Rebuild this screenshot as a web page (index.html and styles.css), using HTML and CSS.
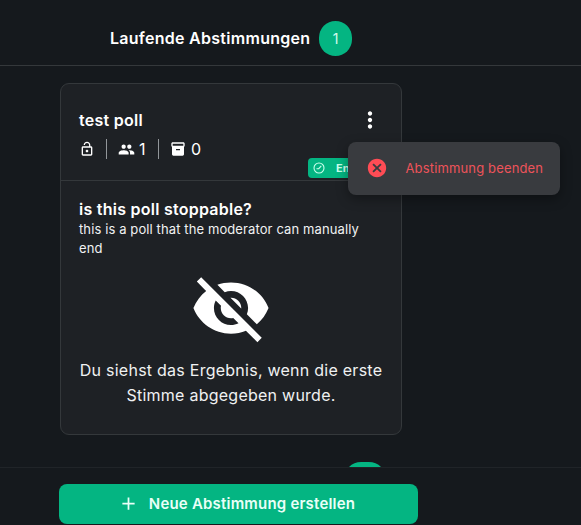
FILE: index.html
```html
<!DOCTYPE html>
<html lang="de">
<head>
<meta charset="utf-8">
<title>Abstimmungen</title>
<link rel="stylesheet" href="styles.css">
</head>
<body>
<div class="app">
  <header class="header">
    <h1 class="header-title">Laufende Abstimmungen</h1>
    <span class="count">1</span>
  </header>
  <main class="content">
    <article class="card">
      <div class="card-head">
        <div class="title-row">
          <h2 class="poll-name">test poll</h2>
          <svg class="more" viewBox="0 0 24 24"><path d="M12 8c1.100 0 2-.9 2-2s-.9-2-2-2-2 .9-2 2 .9 2 2 2zm0 2c-1.100 0-2 .9-2 2s.9 2 2 2 2-.9 2-2-.9-2-2-2zm0 6c-1.100 0-2 .9-2 2s.9 2 2 2 2-.9 2-2-.9-2-2-2z"/></svg>
        </div>
        <div class="meta">
          <svg class="meta-icon" viewBox="0 0 24 24"><path d="M12 17c1.100 0 2-.9 2-2s-.9-2-2-2-2 .9-2 2 .9 2 2 2zm6-9h-1V6c0-2.760-2.240-5-5-5S7 3.240 7 6h1.900c0-1.710 1.390-3.100 3.100-3.100 1.710 0 3.100 1.390 3.100 3.100v2H6c-1.100 0-2 .9-2 2v10c0 1.100.9 2 2 2h12c1.100 0 2-.9 2-2V10c0-1.100-.9-2-2-2zm0 12H6V10h12v10z"/></svg>
          <span class="divider"></span>
          <svg class="meta-icon people" viewBox="0 0 24 24"><path d="M16 11c1.660 0 2.990-1.340 2.990-3S17.660 5 16 5s-3 1.340-3 3 1.340 3 3 3zm-8 0c1.660 0 2.990-1.340 2.990-3S9.660 5 8 5 5 6.340 5 8s1.340 3 3 3zm0 2c-2.330 0-7 1.170-7 3.500V19h14v-2.500C15 14.170 10.330 13 8 13zm8 0c-.29 0-.62.020-.97.050 1.160.84 1.970 1.970 1.970 3.450V19h6v-2.500c0-2.330-4.670-3.500-7-3.500z"/></svg>
          <span class="meta-num">1</span>
          <span class="divider"></span>
          <svg class="meta-icon archive" viewBox="0 0 24 24"><path d="M20 2H4c-1 0-2 .9-2 2v3.010c0 .72.430 1.340 1 1.690V20c0 1.100 1.100 2 2 2h14c.9 0 2-.9 2-2V8.700c.57-.35 1-.97 1-1.690V4c0-1.100-1-2-2-2zm-5 12H9v-2h6v2zm5-7H4V4h16v3z"/></svg>
          <span class="meta-num">0</span>
        </div>
        <div class="chip">
          <svg class="chip-icon" viewBox="0 0 14 14"><circle cx="7" cy="7" r="5"/><path d="M4.500 7.800l2.200-.2 2.600-2.800"/></svg>
          <span>Endlos</span>
        </div>
        <div class="menu">
          <svg class="menu-icon" viewBox="0 0 24 24"><path d="M12 2C6.470 2 2 6.470 2 12s4.470 10 10 10 10-4.470 10-10S17.530 2 12 2zm5 13.590L15.590 17 12 13.410 8.410 17 7 15.590 10.590 12 7 8.410 8.410 7 12 10.590 15.590 7 17 8.410 13.410 12 17 15.590z"/></svg>
          <span class="menu-label">Abstimmung beenden</span>
        </div>
      </div>
      <div class="card-body">
        <h3 class="question">is this poll stoppable?</h3>
        <p class="hint">this is a poll that the moderator can manually end</p>
        <svg class="eye" viewBox="0 0 24 24"><path d="M12 7c2.760 0 5 2.240 5 5 0 .65-.13 1.260-.36 1.830l2.920 2.920c1.510-1.260 2.700-2.890 3.430-4.750-1.730-4.390-6-7.500-11-7.500-1.400 0-2.740.25-3.980.7l2.160 2.160C10.740 7.130 11.350 7 12 7zM2 4.270l2.280 2.280.46.46C3.080 8.300 1.780 10.020 1 12c1.730 4.390 6 7.500 11 7.500 1.550 0 3.030-.3 4.380-.84l.42.42L19.730 22 21 20.730 3.270 3 2 4.270zM7.530 9.800l1.550 1.550c-.05.21-.08.43-.08.65 0 1.660 1.340 3 3 3 .22 0 .44-.03.65-.08l1.550 1.550c-.67.33-1.410.53-2.200.53-2.760 0-5-2.240-5-5 0-.79.2-1.530.53-2.200zm4.310-.78l3.150 3.150.02-.16c0-1.660-1.340-3-3-3l-.17.010z"/></svg>
        <p class="result">Du siehst das Ergebnis, wenn die erste Stimme abgegeben wurde.</p>
      </div>
    </article>
    <div class="next"></div>
  </main>
  <footer class="footer">
    <button class="create"><svg class="plus" viewBox="0 0 24 24"><path d="M19 13h-6v6h-2v-6H5v-2h6V5h2v6h6v2z"/></svg><span>Neue Abstimmung erstellen</span></button>
  </footer>
</div>
</body>
</html>
```
FILE: styles.css
```css
* { box-sizing: border-box; }
body { margin: 0; background: #15191d; color: #fff; font-family: Inter, "Liberation Sans", sans-serif; }
h1, h2, h3, p { margin: 0; }
svg { display: block; fill: currentColor; flex: none; }

.app { height: 525px; display: flex; flex-direction: column; overflow: hidden; }
.header { height: 66px; flex: none; display: flex; align-items: flex-start; padding: 21px 0 0 110px; gap: 9px; border-bottom: 1px solid #34383b; }
.header-title { width: 200px; font-size: 16px; line-height: 35px; font-weight: 600; letter-spacing: .28px; white-space: nowrap; }
.count { width: 33px; height: 35px; border-radius: 16.5px; background: #04b582; text-align: center; font-size: 14px; line-height: 35px; color: #d5fbed; }

.content { height: 401px; flex: none; padding: 17px 0 0 60px; overflow: hidden; }
.card { width: 342px; height: 352px; border: 1px solid #34383b; border-radius: 9px; background: #1e2125; }
.card-head { position: relative; height: 97px; padding: 23px 18px 0; border-bottom: 1px solid #34383b; }
.title-row { height: 25px; display: flex; justify-content: space-between; align-items: center; }
.poll-name { font-size: 16px; font-weight: 600; line-height: 24px; letter-spacing: .27px; }
.more { width: 26px; height: 26px; }
.meta { display: flex; align-items: center; height: 20px; margin-top: 7px; }
.meta-icon { width: 16px; height: 16px; }
.divider { width: 1px; height: 20px; margin: 0 11px; background: #92969a; }
.people { width: 17px; height: 17px; }
.meta-num { margin-left: 4px; font-size: 16px; line-height: 20px; }
.people + .meta-num { width: 8px; }
.archive + .meta-num { margin-left: 5px; }

.chip { position: absolute; left: 247px; top: 74px; width: 76px; height: 20px; padding-left: 4px; display: flex; align-items: center; gap: 10px; border-radius: 4px; background: #04b582; color: #c9ffec; font-size: 11px; font-weight: 700; }
.chip-icon { width: 14px; height: 14px; fill: none; stroke: currentColor; stroke-width: 1.100; }
.menu { position: absolute; z-index: 1; left: 287px; top: 58px; width: 212px; height: 53px; padding: 0 0 1px 18px; display: flex; align-items: center; border-radius: 8px; background: #393b3f; box-shadow: 0 4px 12px rgba(0, 0, 0, .35); color: #ff4c55; }
.menu-icon { width: 22px; height: 22px; }
.menu-label { margin-left: 17.500px; color: #ed535a; font-size: 13px; letter-spacing: .15px; white-space: nowrap; }

.card-body { padding: 17px 18px 0; }
.question { font-size: 16px; font-weight: 600; line-height: 23px; letter-spacing: .25px; }
.hint { margin-top: -1px; font-size: 13px; line-height: 19px; letter-spacing: .11px; color: #f0f1f2; }
.eye { width: 82px; height: 82px; margin: 9px auto 0; }
.result { margin: 9px -4px 0; text-align: center; font-size: 16px; line-height: 25px; letter-spacing: .25px; color: #f0f1f2; }

.next { width: 42px; height: 35px; margin: 27px 0 0 284px; border-radius: 17px; background: #04b582; }
.footer { flex: 1; padding: 16px 0 0 59px; border-top: 1px solid #202428; }
.create { width: 359px; height: 40px; padding: 0 4px 1px 0; border: 0; border-radius: 8px; background: #04b582; color: #e9fff7; font: 600 15px Inter, "Liberation Sans", sans-serif; letter-spacing: .2px; display: flex; align-items: center; justify-content: center; gap: 10px; }
.plus { width: 21px; height: 21px; }
```
